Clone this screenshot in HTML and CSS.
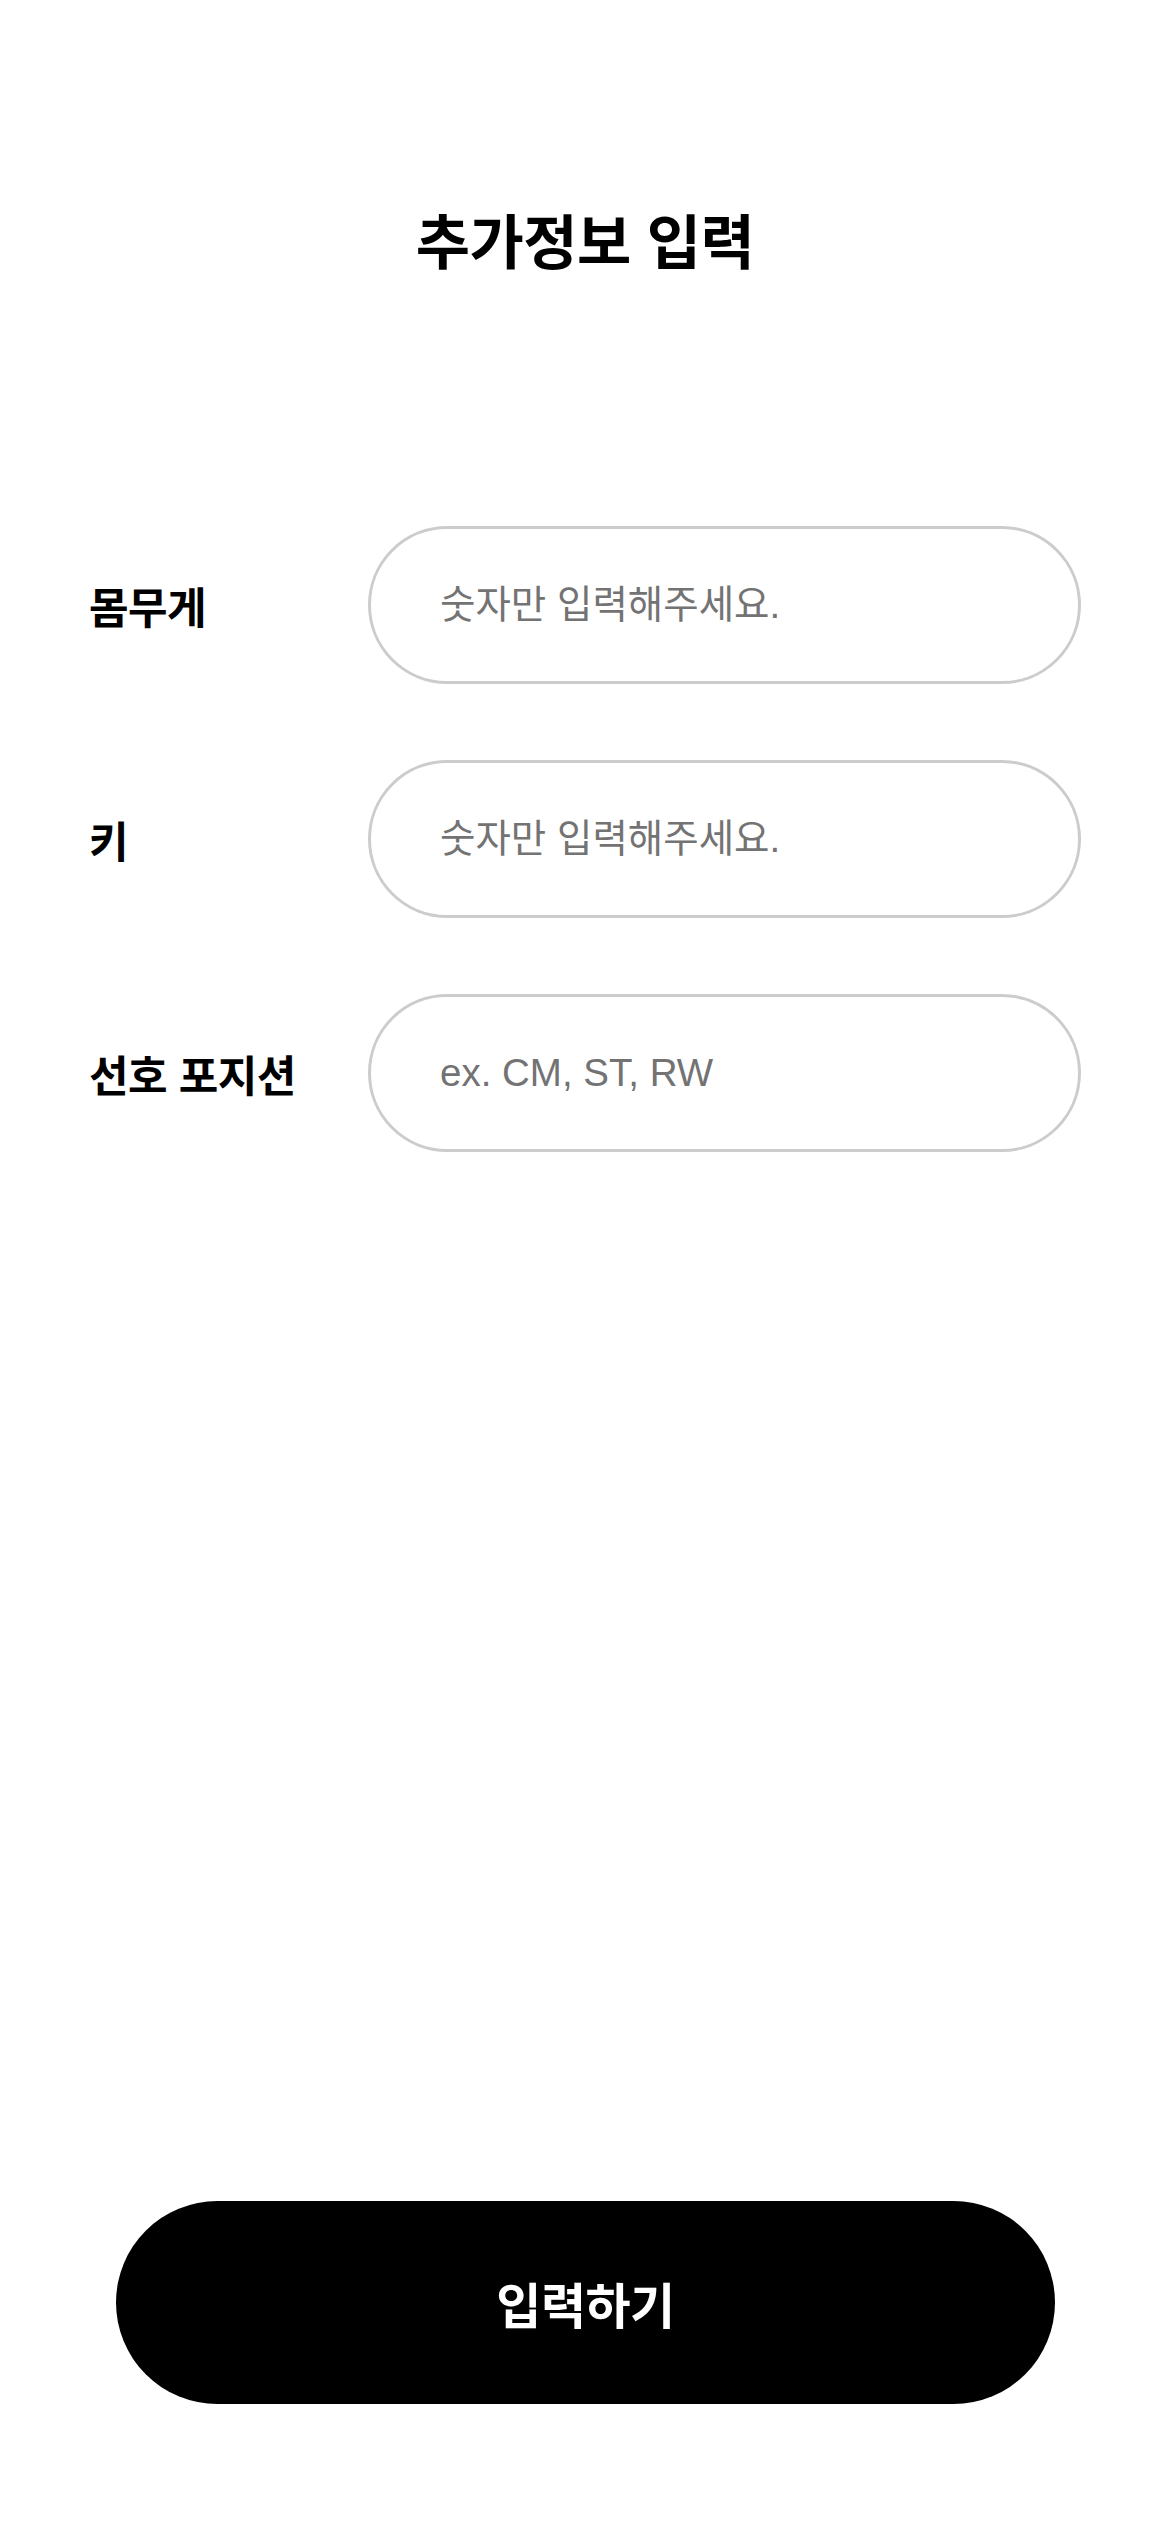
FILE: index.html
```html
<!DOCTYPE html>
<html lang="ko">
<head>
<meta charset="utf-8">
<title>추가정보 입력</title>
<link rel="stylesheet" href="styles.css">
</head>
<body>
<div class="page">
  <h1 class="title">추가정보 입력</h1>
  <form class="form">
    <div class="row">
      <label class="label" for="weight">몸무게</label>
      <input class="field" id="weight" type="text" placeholder="숫자만 입력해주세요.">
    </div>
    <div class="row">
      <label class="label" for="height">키</label>
      <input class="field" id="height" type="text" placeholder="숫자만 입력해주세요.">
    </div>
    <div class="row">
      <label class="label" for="position">선호 포지션</label>
      <input class="field" id="position" type="text" placeholder="ex. CM, ST, RW">
    </div>
  </form>
  <div class="footer">
    <button class="submit" type="button">입력하기</button>
  </div>
</div>
</body>
</html>
```

FILE: styles.css
```css
* {
  box-sizing: border-box;
}

html, body {
  margin: 0;
  padding: 0;
  background: #ffffff;
}

body {
  font-family: "Liberation Sans", "Noto Sans CJK KR", sans-serif;
  color: #000000;
}

.page {
  min-height: 2532px;
  display: flex;
  flex-direction: column;
}

.title {
  margin: 202px 0 0;
  text-align: center;
  font-family: "Noto Sans CJK KR", sans-serif;
  font-size: 59px;
  font-weight: 700;
  line-height: 74px;
  letter-spacing: -0.5px;
}

.form {
  margin-top: 250px;
  padding: 0 89px 0 89px;
  display: flex;
  flex-direction: column;
  gap: 76px;
}

.row {
  display: flex;
  align-items: center;
}

.label {
  width: 279px;
  flex: 0 0 279px;
  font-family: "Noto Sans CJK KR", sans-serif;
  font-size: 43px;
  font-weight: 600;
  letter-spacing: -0.5px;
}

.field {
  flex: 1;
  height: 158px;
  border: 3px solid #cccccc;
  border-radius: 79px;
  padding: 0 40px 0 69px;
  font-family: "Liberation Sans", "Noto Sans CJK KR", sans-serif;
  font-size: 38.5px;
  color: #000000;
  background: #ffffff;
  outline: none;
}

.field::placeholder {
  color: #737373;
  opacity: 1;
}

.footer {
  margin-top: auto;
  padding: 0 115px 128px 116px;
}

.submit {
  display: block;
  width: 100%;
  height: 203px;
  border: none;
  border-radius: 102px;
  background: #000000;
  color: #ffffff;
  font-family: "Noto Sans CJK KR", sans-serif;
  font-size: 49px;
  font-weight: 700;
  letter-spacing: -0.5px;
  cursor: pointer;
}
```
